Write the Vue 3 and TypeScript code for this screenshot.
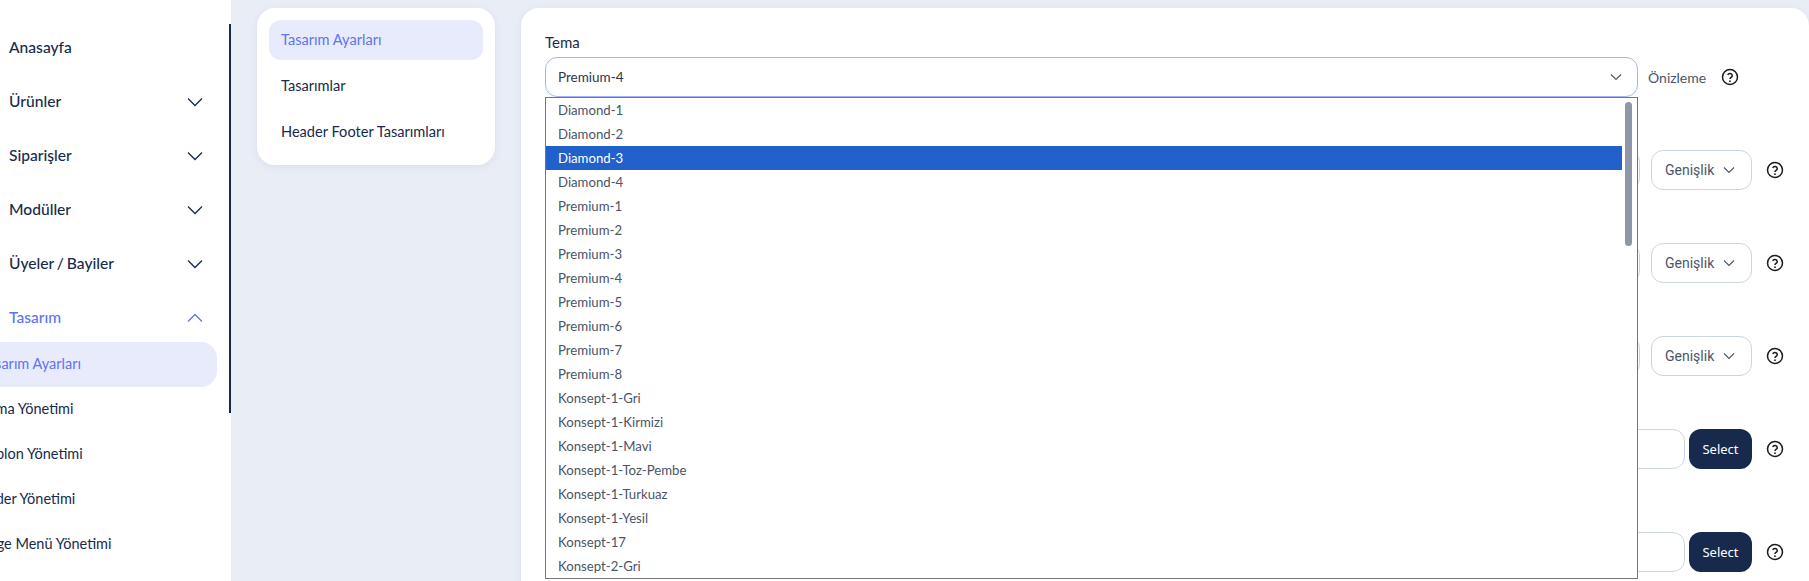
<script setup lang="ts">
const navItems: { label: string; open?: boolean }[] = [
  { label: 'Ürünler' },
  { label: 'Siparişler' },
  { label: 'Modüller' },
  { label: 'Üyeler / Bayiler' },
]
const subItems = ['Tasarım Ayarları', 'Tema Yönetimi', 'Şablon Yönetimi', 'Slider Yönetimi', 'Page Menü Yönetimi']
const sideTabs = ['Tasarım Ayarları', 'Tasarımlar', 'Header Footer Tasarımları']
const options = [
  'Diamond-1', 'Diamond-2', 'Diamond-3', 'Diamond-4',
  'Premium-1', 'Premium-2', 'Premium-3', 'Premium-4', 'Premium-5', 'Premium-6', 'Premium-7', 'Premium-8',
  'Konsept-1-Gri', 'Konsept-1-Kirmizi', 'Konsept-1-Mavi', 'Konsept-1-Toz-Pembe', 'Konsept-1-Turkuaz', 'Konsept-1-Yesil',
  'Konsept-17', 'Konsept-2-Gri',
]
const sizeRows = [0, 1, 2]
const fileRows = [0, 1]
</script>

<template>
  <div class="page">
    <aside class="sidebar">
      <div class="nav">
        <div class="nav-item first"><span class="nav-text">Anasayfa</span></div>
        <div v-for="item in navItems" :key="item.label" class="nav-item">
          <span class="nav-text">{{ item.label }}</span>
          <svg class="chev" viewBox="0 0 16 10" width="16" height="10"><path d="M1 1.5l7 7 7-7" fill="none" stroke="currentColor" stroke-width="1.3" /></svg>
        </div>
        <div class="nav-item open">
          <span class="nav-text">Tasarım</span>
          <svg class="chev" viewBox="0 0 16 10" width="16" height="10"><path d="M1 8.5l7-7 7 7" fill="none" stroke="currentColor" stroke-width="1.3" /></svg>
        </div>
        <div class="sub">
          <div v-for="(s, i) in subItems" :key="s" class="sub-item" :class="{ active: i === 0 }"><span class="sub-text">{{ s }}</span></div>
        </div>
      </div>
      <div class="scroll-thumb"></div>
    </aside>

    <div class="content">
      <section class="tabs card">
        <div v-for="(t, i) in sideTabs" :key="t" class="tab" :class="{ active: i === 0 }">{{ t }}</div>
      </section>

      <section class="main card">
        <div class="label">Tema</div>
        <div class="row theme-row">
          <div class="theme-wrap">
            <div class="select theme">
              <span>Premium-4</span>
              <svg viewBox="0 0 12 8" width="12" height="8"><path d="M1 1.5l5 5 5-5" fill="none" stroke="#4a5568" stroke-width="1.1" /></svg>
            </div>
            <div class="dropdown">
              <div class="opts">
                <div v-for="o in options" :key="o" class="opt" :class="{ sel: o === 'Diamond-3' }">{{ o }}</div>
              </div>
              <div class="track"><div class="thumb"></div></div>
            </div>
          </div>
          <span class="preview">Önizleme</span>
          <svg class="help help-first" viewBox="0 0 24 24" width="18" height="18"><circle cx="12" cy="12" r="10" fill="none" stroke="#1a1a1a" stroke-width="2" /><path d="M9 9.4a3.1 3.1 0 0 1 6 .8c0 2.2-3 2.5-3 4.4" fill="none" stroke="#1a1a1a" stroke-width="2" /><circle cx="12" cy="17.6" r="1.2" fill="#1a1a1a" /></svg>
        </div>

        <div v-for="r in sizeRows" :key="r" class="row size-row">
          <div class="input grow"></div>
          <div class="select width-sel">
            <span>Genişlik</span>
            <svg viewBox="0 0 12 8" width="12" height="8"><path d="M1 1.5l5 5 5-5" fill="none" stroke="#4a5568" stroke-width="1.1" /></svg>
          </div>
          <svg class="help" viewBox="0 0 24 24" width="18" height="18"><circle cx="12" cy="12" r="10" fill="none" stroke="#1a1a1a" stroke-width="2" /><path d="M9 9.4a3.1 3.1 0 0 1 6 .8c0 2.2-3 2.5-3 4.4" fill="none" stroke="#1a1a1a" stroke-width="2" /><circle cx="12" cy="17.6" r="1.2" fill="#1a1a1a" /></svg>
        </div>

        <div v-for="r in fileRows" :key="r" class="row file-row">
          <div class="input grow"></div>
          <button class="btn" type="button">Select</button>
          <svg class="help" viewBox="0 0 24 24" width="18" height="18"><circle cx="12" cy="12" r="10" fill="none" stroke="#1a1a1a" stroke-width="2" /><path d="M9 9.4a3.1 3.1 0 0 1 6 .8c0 2.2-3 2.5-3 4.4" fill="none" stroke="#1a1a1a" stroke-width="2" /><circle cx="12" cy="17.6" r="1.2" fill="#1a1a1a" /></svg>
        </div>
      </section>
    </div>
  </div>
</template>

<style>
html, body { margin: 0; background: #e9edf6; overflow: hidden; }
</style>

<style scoped>
.page {
  display: flex;
  width: 1809px;
  height: 581px;
  overflow: hidden;
  background: #e9edf6;
  font-family: "Lato", "Noto Sans", sans-serif;
  color: #172a4d;
}
.sidebar {
  position: relative;
  flex: none;
  width: 231px;
  height: 581px;
  background: #fff;
  overflow: hidden;
}
.scroll-thumb {
  position: absolute;
  right: 0;
  top: 24px;
  width: 2px;
  height: 389px;
  background: #172a4d;
}
.nav { padding-top: 21px; }
.nav-item {
  display: flex;
  align-items: center;
  justify-content: space-between;
  height: 54px;
  padding: 0 28px 0 9px;
  font-size: 15.6px;
  font-weight: 500;
  word-spacing: -1px;
  color: #172a4d;
}
.nav-text { padding-bottom: 2px; }
.chev { color: #172a4d; }
.nav-item.open { color: #5d74f5; }
.nav-item.open .chev { color: #5d74f5; }
.sub { margin-top: -3px; margin-left: -30px; }
.sub-item {
  display: flex;
  align-items: center;
  width: 247px;
  height: 45px;
  padding-left: 11px;
  box-sizing: border-box;
  font-size: 14.5px;
  color: #172a4d;
  border-radius: 0 16px 16px 0;
}
.sub-text { display: block; padding-bottom: 2px; white-space: nowrap; }
.sub-item.active { color: #5d74f5; background: #e8ebfc; }
.content {
  flex: 1;
  display: flex;
  align-items: flex-start;
  gap: 26px;
  padding: 8px 0 0 26px;
  min-width: 0;
}
.card {
  background: #fff;
  border-radius: 18px;
  box-shadow: 0 2px 10px rgba(30, 50, 100, 0.07);
}
.tabs {
  flex: none;
  width: 214px;
  padding: 12px;
  height: 133px;
  box-sizing: content-box;
}
.tab {
  display: flex;
  align-items: center;
  box-sizing: border-box;
  height: 40px;
  margin-bottom: 6px;
  padding: 0 0 2px 12px;
  border-radius: 12px;
  font-size: 14.6px;
  color: #172a4d;
}
.tab.active { background: #e8ebfc; color: #5d74f5; }
.main {
  flex: 1;
  min-width: 0;
  height: 620px;
  padding: 0 0 0 24px;
  border-radius: 18px 18px 0 0;
}
.label {
  font-size: 15px;
  line-height: 18px;
  padding-top: 25px;
  margin-bottom: 6px;
  color: #172a4d;
}
.row { display: flex; align-items: center; height: 40px; }
.theme-row { margin-bottom: 53px; }
.size-row { margin-bottom: 53px; }
.file-row { margin-bottom: 63px; }
.theme-wrap { position: relative; width: 1093px; flex: none; }
.select {
  display: flex;
  align-items: center;
  justify-content: space-between;
  box-sizing: border-box;
  background: #fff;
  border-radius: 12px;
  border: 1px solid #cbd5e1;
  color: #4a5568;
  height: 40px;
}
.theme {
  border-color: #a5b4fc;
  padding: 0 15px 0 12px;
  font-size: 13.5px;
  color: #2d3748;
}
.dropdown {
  position: absolute;
  z-index: 5;
  left: 0;
  top: 40px;
  box-sizing: border-box;
  width: 1093px;
  height: 482px;
  background: #fff;
  border: 1px solid #767676;
  display: flex;
  overflow: hidden;
}
.opts { flex: none; width: 1076px; }
.opt {
  height: 24px;
  line-height: 25px;
  padding-left: 12px;
  font-size: 13.2px;
  color: #4a5568;
}
.opt.sel { background: #2260cb; color: #fff; }
.track { flex: 1; position: relative; }
.thumb {
  position: absolute;
  left: 3px;
  top: 4px;
  width: 7px;
  height: 144px;
  border-radius: 4px;
  background: #8f96a8;
}
.preview { margin-left: 10px; font-size: 14px; color: #4a5568; }
.help { flex: none; }
.help-first { margin-left: 15px; }
.grow { flex: none; }
.input {
  box-sizing: border-box;
  height: 40px;
  background: #fff;
  border: 1px solid #cbd5e1;
  border-radius: 12px;
}
.size-row .input { width: 1095px; }
.file-row .input { width: 1140px; }
.width-sel {
  flex: none;
  width: 101px;
  margin-left: 11px;
  padding: 0 16px 0 13px;
  font-family: "Roboto", sans-serif;
  font-size: 14px;
}
.size-row .help, .file-row .help { margin-left: 14px; }
.btn {
  flex: none;
  box-sizing: border-box;
  width: 63px;
  height: 40px;
  margin-left: 4px;
  border: 0;
  border-radius: 12px;
  background: #172a4d;
  color: #fff;
  font-family: "Noto Sans", sans-serif;
  font-size: 13px;
  padding: 0;
}
</style>
